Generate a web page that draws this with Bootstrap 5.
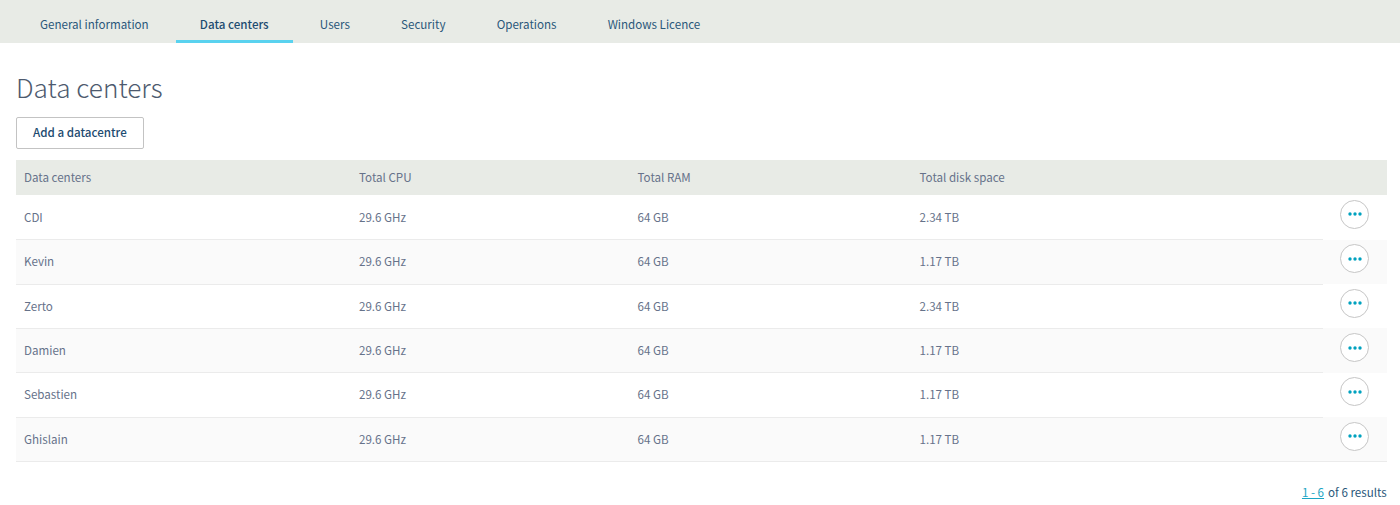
<!DOCTYPE html>
<html lang="en">
<head>
<meta charset="utf-8">
<meta name="viewport" content="width=device-width, initial-scale=1">
<title>Data centers</title>
<link href="https://cdn.jsdelivr.net/npm/bootstrap@5.3.0/dist/css/bootstrap.min.css" rel="stylesheet">
<style>
  body { font-family: "Noto Sans CJK JP", sans-serif; font-size: 11.6px; line-height: 20px; color: #66728a; overflow: hidden; }
  .tabbar { height: 43.3px; background: #e8ebe6; padding-left: 15.8px; gap: 2.8px; }
  .tabbar .nav-link { height: 43.3px; padding: 14px 24.2px 0; color: #2a577a; border-bottom: 3.4px solid transparent; }
  .tabbar .nav-link.active { color: #1d4b70; font-weight: 500; border-bottom-color: #59d2ef; }
  .page { padding: 28.7px 13.3px 0 16px; }
  h1 { font-size: 26.2px; font-weight: 300; line-height: 30px; color: #4d5a6e; margin-bottom: 15px; }
  .btn-add { width: 127.7px; height: 32px; padding: 0 0 2px; font-size: 11.6px; font-weight: 500; line-height: 28px; color: #1d4b70; border: 1px solid #c3c3c3; border-radius: 2px; background: #fff; }
  .dc-table { margin: 11.4px 0 0; table-layout: fixed; color: inherit; }
  .dc-table > :not(caption) > * > * { padding: 0 8px 1.2px; border: 0; box-shadow: none; background: transparent; color: inherit; }
  .dc-table thead tr { height: 35px; background: #e8ebe6; }
  .dc-table th { font-weight: 400; vertical-align: middle; }
  .dc-table tbody tr { height: 44.33px; }
  .dc-table > tbody > tr > td { border-bottom: 1px solid #ebebeb; }
  .dc-table > tbody > tr:nth-child(even) > td { background: #fafafa; }
  .dc-table > tbody > tr > td.action { padding: 0 0 6px; border-bottom-color: transparent; text-align: center; }
  .dc-table > tbody > tr:last-child > td.action { border-bottom-color: #ebebeb; }
  .btn-dots { width: 29px; height: 29px; padding: 0; border: 1px solid #c6c6c6; border-radius: 50%; background: #fff; }
  .results { margin-top: 20.5px; color: #2a577a; }
  .results a { color: #1aa5c4; }
</style>
</head>
<body>
<nav class="nav tabbar flex-nowrap">
  <a class="nav-link" href="#">General information</a>
  <a class="nav-link active" href="#">Data centers</a>
  <a class="nav-link" href="#">Users</a>
  <a class="nav-link" href="#">Security</a>
  <a class="nav-link" href="#">Operations</a>
  <a class="nav-link" href="#">Windows Licence</a>
</nav>
<main class="page">
  <h1>Data centers</h1>
  <button class="btn btn-add d-block" type="button">Add a datacentre</button>
  <table class="table align-middle dc-table">
    <colgroup><col style="width:335px"><col style="width:278.5px"><col style="width:282px"><col><col style="width:64px"></colgroup>
    <thead><tr><th>Data centers</th><th>Total CPU</th><th>Total RAM</th><th>Total disk space</th><th></th></tr></thead>
    <tbody id="rows"></tbody>
  </table>
  <div class="results text-end"><a href="#">1 - 6</a><span class="ms-1">of 6 results</span></div>
</main>
<script>
  const centers = [["CDI", "2.34"], ["Kevin", "1.17"], ["Zerto", "2.34"], ["Damien", "1.17"], ["Sebastien", "1.17"], ["Ghislain", "1.17"]];
  document.getElementById("rows").innerHTML = centers.map(([name, disk]) => `
    <tr><td>${name}</td><td>29.6 GHz</td><td>64 GB</td><td>${disk} TB</td>
    <td class="action"><button class="btn btn-dots d-inline-flex align-items-center justify-content-center align-middle" type="button" aria-label="Actions">
      <svg width="14" height="4" viewBox="0 0 14 4" fill="#00a2bf"><circle cx="2" cy="2" r="1.7"/><circle cx="7" cy="2" r="1.7"/><circle cx="12" cy="2" r="1.7"/></svg>
    </button></td></tr>`).join("");
</script>
<script src="https://cdn.jsdelivr.net/npm/bootstrap@5.3.0/dist/js/bootstrap.bundle.min.js"></script>
</body>
</html>
